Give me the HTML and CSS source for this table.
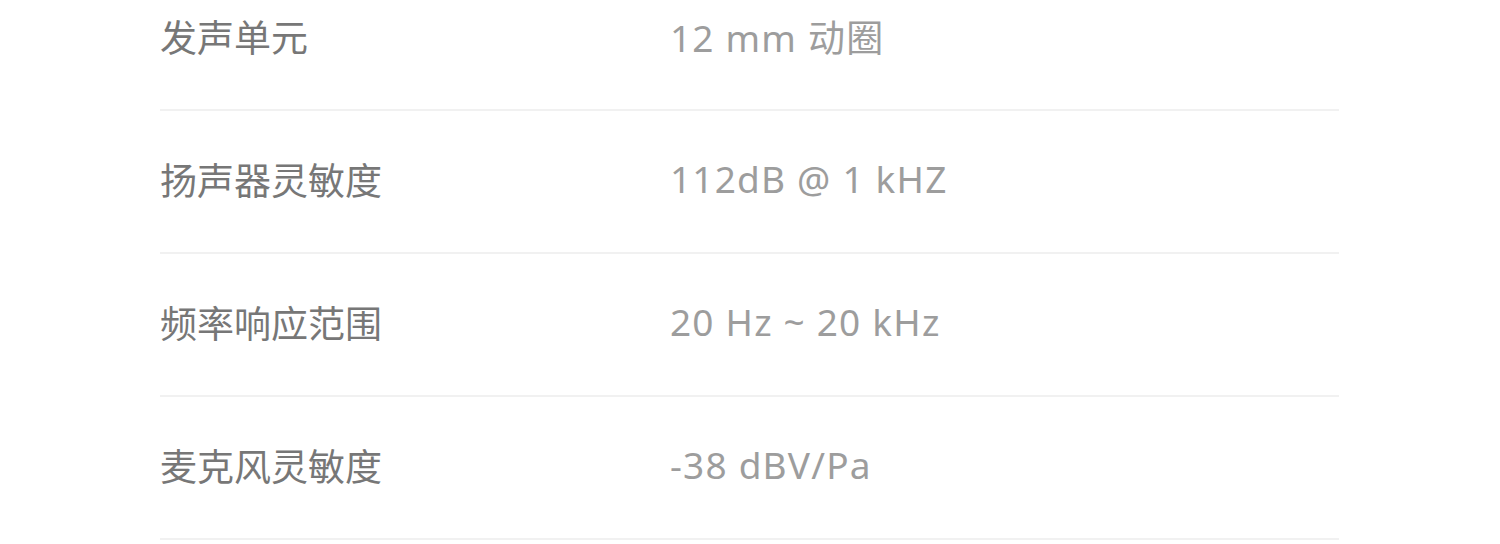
FILE: index.html
```html
<!DOCTYPE html>
<html lang="zh-CN">
<head>
    <meta charset="UTF-8">
    <meta name="viewport" content="width=device-width, initial-scale=1.0">
    <title>规格参数</title>
    <link rel="stylesheet" href="styles.css">
</head>
<body>
    <div class="spec-list">
        <div class="spec-row">
            <span class="spec-name">发声单元</span>
            <span class="spec-value">12 mm 动圈</span>
        </div>
        <div class="spec-row">
            <span class="spec-name">扬声器灵敏度</span>
            <span class="spec-value">112dB @ 1 kHZ</span>
        </div>
        <div class="spec-row">
            <span class="spec-name">频率响应范围</span>
            <span class="spec-value">20 Hz ~ 20 kHz</span>
        </div>
        <div class="spec-row">
            <span class="spec-name">麦克风灵敏度</span>
            <span class="spec-value">-38 dBV/Pa</span>
        </div>
    </div>
</body>
</html>
```

FILE: styles.css
```css
body {
    margin: 0;
    padding: 0;
    background-color: #ffffff;
    font-family: "Noto Sans", "Noto Sans CJK SC", sans-serif;
    overflow: hidden;
}

.spec-list {
    margin: -32px 161px 0 160px;
}

.spec-row {
    display: flex;
    align-items: center;
    height: 135px;
    padding-bottom: 6px;
    border-bottom: 2px solid #f1f1f1;
}

.spec-name {
    width: 510px;
    font-size: 37px;
    color: #777777;
}

.spec-value {
    font-size: 37px;
    letter-spacing: 1.2px;
    color: #9d9d9d;
}
```
